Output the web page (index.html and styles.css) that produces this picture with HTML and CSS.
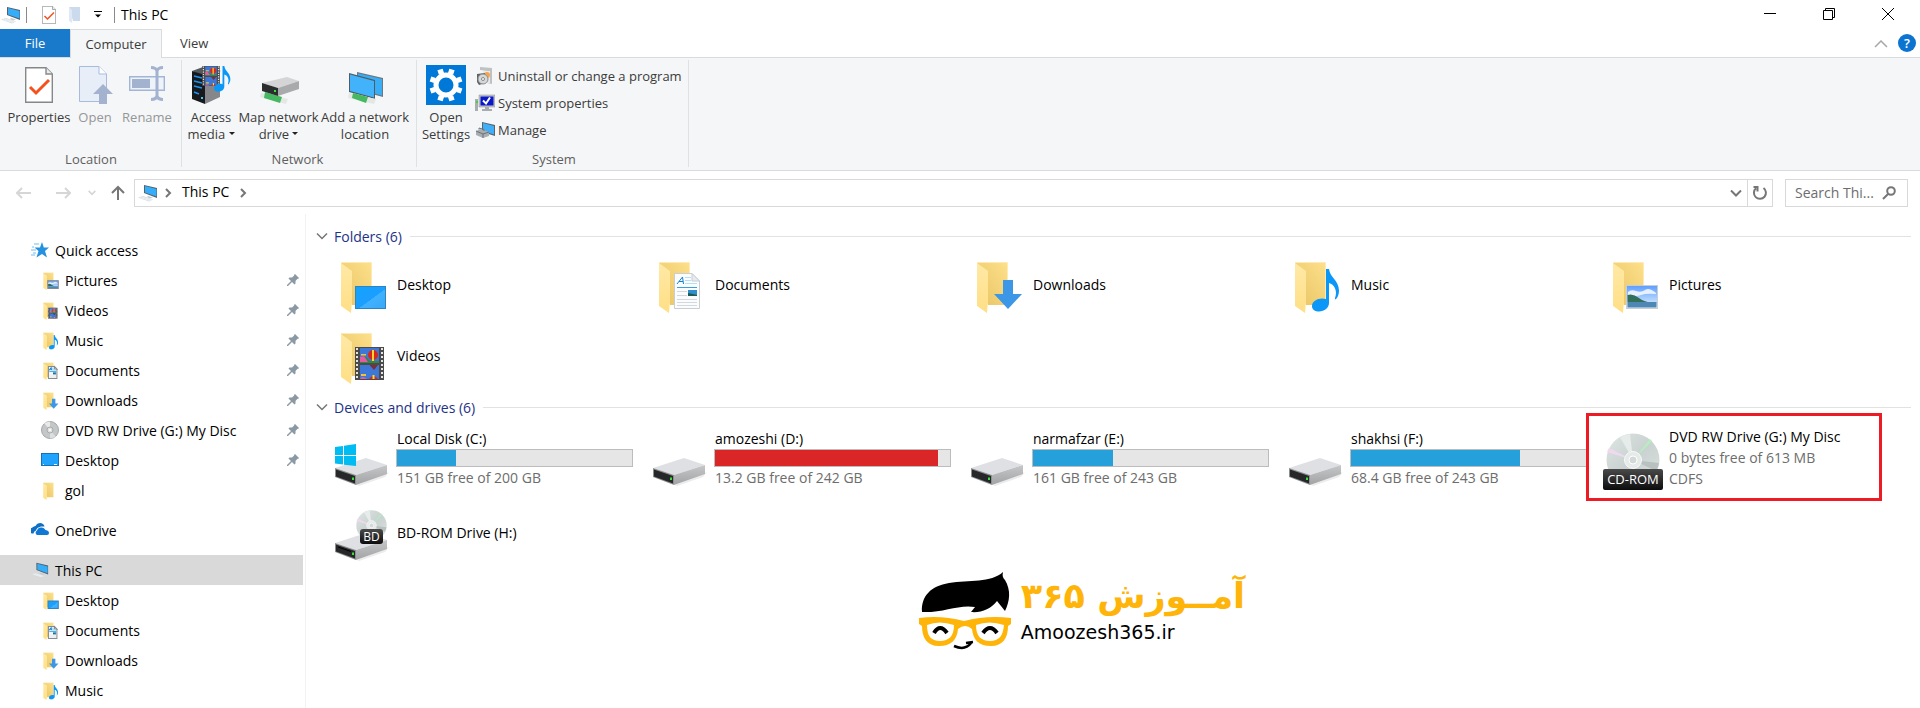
FILE: index.html
```
<!DOCTYPE html>
<html lang="en">

<head>
  <meta charset="UTF-8">
  <title>This PC</title>
  <link rel="stylesheet" href="styles.css">
</head>

<body>
  <!-- shared icons -->
  <svg class="sprite" aria-hidden="true">
    <defs>
      <linearGradient id="gBack" x1="0" y1="1" x2="1" y2="0"><stop offset="0" stop-color="#e8c364"/><stop offset="1" stop-color="#fde08a"/></linearGradient>
      <linearGradient id="gFlap" x1="0" y1="0" x2="0" y2="1"><stop offset="0" stop-color="#ffe9a6"/><stop offset="1" stop-color="#ffdf85"/></linearGradient>
      <linearGradient id="gBlue" x1="0" y1="0" x2="1" y2="1"><stop offset="0" stop-color="#14a3ff"/><stop offset=".55" stop-color="#1b9eff"/><stop offset=".56" stop-color="#3fb2ff"/><stop offset="1" stop-color="#3aa8f5"/></linearGradient>
      <linearGradient id="gSide" x1="0" y1="0" x2="0" y2="1"><stop offset="0" stop-color="#c6c7c9"/><stop offset="1" stop-color="#a2a3a5"/></linearGradient>
      <linearGradient id="gDisc" x1="0" y1="0" x2="1" y2="1"><stop offset="0" stop-color="#dfe6e5"/><stop offset=".5" stop-color="#c9d2d0"/><stop offset="1" stop-color="#dde3e2"/></linearGradient>
      <linearGradient id="gSky" x1="0" y1="0" x2="0" y2="1"><stop offset="0" stop-color="#5c9dff"/><stop offset="1" stop-color="#e4f5ff"/></linearGradient>
    </defs>

    <symbol id="folder" viewBox="0 -5 52 56">
      <path d="M0 0H30V43H11Z" fill="url(#gBack)"/>
      <path d="M0 .5H30.500V43" fill="none" stroke="#fdeab4" stroke-width="1"/>
      <path d="M0 1L11 9V38L10 51L0 44Z" fill="url(#gFlap)"/>
    </symbol>

    <symbol id="film" viewBox="0 0 29 33">
      <path d="M0 0H29V33H0Z" fill="#4b4b4b"/>
      <path d="M2 1V33M27 1V33" stroke="#e4e4e4" stroke-width="2" stroke-dasharray="2 2"/>
      <path d="M5 1H24V16H5ZM5 18H24V32H5Z" fill="#3d78d8"/>
      <path d="M5 12Q8 7 11 10L15 14H24V16H5Z" fill="#2f8a3c"/>
      <path d="M5 10L9 9L13 15H5Z" fill="#e55aa5"/>
      <path d="M6 7H11V8.500H6ZM6 27H11V29H6Z" fill="#f2c530"/>
      <circle cx="18" cy="8" r="5" fill="#d8261c"/>
      <path d="M17 3H19V14H17Z" fill="#ffd52e"/>
      <path d="M14.500 18H23L19 23Z" fill="#7a2f3a"/>
      <path d="M14 32A5 5 0 0 1 23 32Z" fill="#d8261c"/>
      <path d="M17.500 28H19.500V32H17.500Z" fill="#ffd52e"/>
      <path d="M5 32Q7 28 12 32Z" fill="#e55aa5"/>
    </symbol>

    <symbol id="note" viewBox="0 0 28 43">
      <path d="M14 0H17C18 9 27 11 27 22C27 26 25 29 24 30C23 31 23 30 23 29C26 22 22 15 17 14V34C17 39 12 43 6 42.500C1 42 0 39 0 37C0 32 7 28 14 30Z" fill="#0a97f7"/>
    </symbol>

    <symbol id="f-desktop" viewBox="0 -5 52 56">
      <use href="#folder" x="0" y="-5" width="52" height="56"/>
      <rect x="14.500" y="24.500" width="30" height="22" fill="url(#gBlue)" stroke="#2d84c0"/>
    </symbol>
    <symbol id="f-documents" viewBox="0 -5 52 56">
      <use href="#folder" x="0" y="-5" width="52" height="56"/>
      <path d="M15.500 11.500H33L40.500 19V46.500H15.500Z" fill="#fbfcfd" stroke="currentColor"/>
      <path d="M33 11.500V19H40.500Z" fill="#e8ebee" stroke="currentColor"/>
      <path d="M26 15.500H32M26 18.500H32M26 21.500H38" stroke="#b6dff5"/>
      <path d="M18 25.500H38" stroke="#3aa0dc"/>
      <path d="M18 29.500H28M18 33.500H28M18 37.500H38M18 40.500H38M18 43.500H38" stroke="#d3d8dc" stroke-width="1"/>
      <path d="M29 28H38V34H29Z" fill="#2e8fd0"/>
      <path d="M29 31L34 32L38 33V34H29Z" fill="#1d5b53"/>
      <path d="M18 22L23.500 15L24.500 22M20 19.500H24" fill="none" stroke="#1583cc"/>
    </symbol>
    <symbol id="f-downloads" viewBox="0 -5 52 56">
      <use href="#folder" x="0" y="-5" width="52" height="56"/>
      <path d="M26 18H36V32H45L31 47L17 32H26Z" fill="#3c97e6"/>
    </symbol>
    <symbol id="f-music" viewBox="0 -5 52 56">
      <use href="#folder" x="0" y="-5" width="52" height="56"/>
      <use href="#note" x="17" y="7" width="28" height="43"/>
    </symbol>
    <symbol id="f-pictures" viewBox="0 -5 52 56">
      <use href="#folder" x="0" y="-5" width="52" height="56"/>
      <rect x="13.500" y="23.500" width="31" height="23" fill="url(#gSky)" stroke="currentColor"/>
      <path d="M15 30Q18 27 23 29T32 28T43 31V32Q33 31 28 33T15 33Z" fill="#fff" opacity=".8"/>
      <path d="M14.500 33Q20 31 26 36T41 40H14.500Z" fill="#33705c"/>
      <path d="M14.500 40H43.500V45.500H14.500Z" fill="#4e86b4"/>
    </symbol>
    <symbol id="f-videos" viewBox="0 -5 52 56">
      <use href="#folder" x="0" y="-5" width="52" height="56"/>
      <use href="#film" x="14" y="14" width="29" height="33"/>
    </symbol>

    <symbol id="drivebox" viewBox="0 0 54 28">
      <path d="M22 27L54 14L50 19L24 28Z" fill="#ececec"/>
      <path d="M0 10L31 0L52 7L21 17Z" fill="#dfe0e4"/>
      <path d="M21 17L52 7V16L21 27Z" fill="url(#gSide)"/>
      <path d="M0 10L21 17V27L0 19Z" fill="#8d8e90"/>
      <path d="M1 11.500L20 18V25.500L1 18.500Z" fill="#262728"/>
      <path d="M17 19.500h2v2.500h-2z" fill="#37e03c"/>
    </symbol>
    <symbol id="disc" viewBox="0 0 54 54">
      <circle cx="27" cy="27" r="26.500" fill="url(#gDisc)"/>
      <path d="M27 27L1 19A27 27 0 0 1 3 15Z" fill="#efd9ef"/>
      <path d="M27 27L44 6L46 8Z" fill="#b5efbd"/>
      <path d="M27 27L53 30A26 26 0 0 1 50 38Z" fill="#b8c1bf"/>
      <path d="M27 27L14 4A26 26 0 0 1 24 1Z" fill="#e6ecea"/>
      <circle cx="27" cy="27" r="8.500" fill="#e6ebea" stroke="#f7f9f9"/>
      <circle cx="27" cy="27" r="4" fill="#d2d9d8" stroke="#fff"/>
    </symbol>
    <symbol id="drive" viewBox="0 0 64 64">
      <use href="#drivebox" x="7" y="32" width="54" height="28"/>
    </symbol>
    <symbol id="drive-win" viewBox="0 0 64 64">
      <use href="#drivebox" x="7" y="32" width="54" height="28"/>
      <path d="M7 21L15 20V29H7ZM16 19.800L28 18V29H16ZM7 30H15V38.500L7 37.500ZM16 30H28V40L16 38.700Z" fill="#00bcf2"/>
    </symbol>
    <symbol id="drive-bd" viewBox="0 0 64 64">
      <use href="#disc" x="28" y="9" width="31" height="31"/>
      <use href="#drivebox" x="7" y="32" width="54" height="28"/>
      <path d="M10 46L23 50.500" stroke="#000"/>
    </symbol>
    <symbol id="drive-cd" viewBox="0 0 64 64">
      <use href="#disc" x="6" y="7" width="54" height="54"/>
    </symbol>

    <symbol id="pc" viewBox="0 0 20 18">
      <path d="M6 1L19 4V14L6 9Z" fill="#54606a"/>
      <path d="M7 2L18.500 5V12.500L7 8.500Z" fill="#35adf9"/>
      <path d="M10 12L15 13.500L12 14.500L9 13Z" fill="#c2cbd2"/>
      <path d="M0 13.500L5 12L15 15.500L11 17.500Z" fill="#d2dadf"/>
      <path d="M2 13.500L12 16.500M4 13L14 16" stroke="#fff" stroke-width=".6"/>
    </symbol>
    <symbol id="doccheck" viewBox="0 0 28 36">
      <path d="M.7 .7H21L27.300 7V35.300H.7Z" fill="#fff" stroke="#85888b" stroke-width="1.400"/>
      <path d="M21 .7V7H27.300" fill="#ececec" stroke="#85888b" stroke-width="1.400"/>
      <path d="M5 20L11 26L24 13" fill="none" stroke="#f4511e" stroke-width="3"/>
    </symbol>
    <symbol id="pin" viewBox="0 0 12 12">
      <path d="M8 0L12 4L11 5L10.500 4.800L8.500 7L8.500 9.500L7.500 10.500L5 8L1 12L0 12L0 11L4 7L1.500 4.500L2.500 3.500L5 3.500L7.200 1.500L7 1Z" fill="#8b99a4"/>
    </symbol>
    <symbol id="screen" viewBox="0 0 18 14">
      <rect x=".5" y=".5" width="17" height="12" fill="#1fa3fd" stroke="#1573b5"/>
      <path d="M2 11.500h1M13 11.500h3" stroke="#fff"/>
    </symbol>
    <symbol id="down" viewBox="0 0 12 12"><path d="M1 3.500L6 8.500L11 3.500" fill="none" stroke="currentColor" stroke-width="1.500"/></symbol>
    <symbol id="right" viewBox="0 0 12 12"><path d="M4 2L8 6L4 10" fill="none" stroke="currentColor" stroke-width="2"/></symbol>
  </svg>

  <header class="titlebar">
    <svg class="pc-icon"><use href="#pc"/></svg>
    <span class="sep"></span>
    <button class="qat" aria-label="Properties"><svg width="14" height="18"><use href="#doccheck"/></svg></button>
    <button class="qat" aria-label="New folder"><svg width="14" height="18" viewBox="0 0 14 18"><path d="M1 1H12V15H5Z" fill="#ccdaed"/><path d="M1 1L4 4V17L1 15Z" fill="#dfe9f5"/></svg></button>
    <button class="qat qat-more" aria-label="Customize"><svg width="8" height="8" viewBox="0 0 8 8"><path d="M0 .5H8" stroke="#000"/><path d="M1 3.500H7L4 6.500Z"/></svg></button>
    <span class="sep"></span>
    <h1>This PC</h1>
    <div class="win-buttons">
      <button aria-label="Minimize"><svg width="12" height="12" viewBox="0 0 12 12"><path d="M0 5.500H12"/></svg></button>
      <button aria-label="Restore"><svg width="12" height="12" viewBox="0 0 12 12"><path d="M.5 2.500H9.500V11.500H.5ZM2.500 2.500V.5H11.500V9.500H9.500"/></svg></button>
      <button aria-label="Close"><svg width="12" height="12" viewBox="0 0 12 12"><path d="M0 0L12 12M12 0L0 12"/></svg></button>
    </div>
  </header>

  <nav class="tabs">
    <button class="tab tab-file">File</button>
    <button class="tab tab-active">Computer</button>
    <button class="tab">View</button>
    <div class="tabs-right">
      <button aria-label="Collapse ribbon"><svg width="14" height="8" viewBox="0 0 14 8"><path d="M1 7L7 1L13 7" fill="none" stroke="#a8a8a8" stroke-width="1.500"/></svg></button>
      <button class="help" aria-label="Help">?</button>
    </div>
  </nav>

  <section class="ribbon">
    <div class="group location">
      <div class="group-body">
        <button class="big w64"><svg width="28" height="36"><use href="#doccheck"/></svg>Properties</button>
        <button class="big w48" disabled><svg width="36" height="38" viewBox="0 0 36 38"><path d="M2.500 .5H22L29.500 8V35.500H2.500Z" fill="#e7eef8" stroke="#a9bbdc"/><path d="M22 .5V8H29.500" fill="#fff" stroke="#a9bbdc"/><path d="M26 18L36 28H30V38H22V28H16Z" fill="#a3b2cf"/></svg>Open</button>
        <button class="big w56" disabled><svg width="36" height="38" viewBox="0 0 36 38"><path d="M.7 10.700H35.300V24.300H.7Z" fill="#eef3fa" stroke="#a3b5d5" stroke-width="1.400"/><path d="M3 13H21V22H3Z" fill="#a3b2cf"/><path d="M28 4V31M22 1.500Q27 1.500 28 5Q29 1.500 34 1.500M22 33.500Q27 33.500 28 30Q29 33.500 34 33.500" fill="none" stroke="#a3b2cf" stroke-width="3"/></svg>Rename</button>
      </div>
      <div class="group-name">Location</div>
    </div>
    <div class="group network">
      <div class="group-body">
        <button class="big w52">
          <svg width="40" height="38" viewBox="0 0 40 38">
            <path d="M1 5L12 1L30 5L12 10Z" fill="#55585c"/><path d="M1 5L14 9V38L1 33Z" fill="#17191c"/><path d="M14 9L29 5V31L14 38Z" fill="#85878b"/>
            <path d="M3 10L11 12M3 15L11 17M3 20L11 22M3 26L8 28" stroke="#1b95f0" stroke-width="1.500"/><path d="M10 31h2v2h-2z" fill="#3cc7ff"/>
            <use href="#film" x="11" y="0" width="18" height="20"/><use href="#note" x="23" y="0" width="17" height="26"/>
          </svg>Access<br><span>media <i class="caret"></i></span></button>
        <button class="big w83">
          <svg width="40" height="38" viewBox="0 0 40 38">
            <path d="M2 27L29 33L27 38L1 31Z" fill="#e3e8e5"/><path d="M6 26L23 31L21 37L5 32Z" fill="#47b862"/>
            <path d="M3 17L28 11L40 15L19 22Z" fill="#d5d5d6"/><path d="M19 22L40 15V23L19 30Z" fill="#a9aaac"/><path d="M3 17L19 22V30L3 25Z" fill="#2b2d2f"/><path d="M15 24h2v2h-2z" fill="#37e03c"/>
          </svg>Map network<br><span>drive <i class="caret"></i></span></button>
        <button class="big w90">
          <svg width="40" height="38" viewBox="0 0 40 38">
            <path d="M12 6L38 12V31L12 24Z" fill="#6c7881"/><path d="M13 7.500L37 13V29.500L13 23Z" fill="#38aef7"/>
            <path d="M4 7L30 14V33L4 26Z" fill="#4f5c66"/><path d="M5 8.500L29 15V31.500L5 25Z" fill="#42b2fa"/>
            <path d="M4 27L31 33L29 38L3 32Z" fill="#e3e8e5"/><path d="M8 27L23 31L21 37L7 32Z" fill="#47b862"/>
          </svg>Add a network<br>location</button>
      </div>
      <div class="group-name">Network</div>
    </div>
    <div class="group system">
      <div class="group-body">
        <button class="big w52 settings">
          <svg width="40" height="40" viewBox="0 0 40 40"><path d="M0 0H40V40H0Z" fill="#0078d7"/><circle cx="20" cy="20" r="10" fill="none" stroke="#fff" stroke-width="5"/><path d="M15.500 9L14 4.500M24.500 9L26 4.500M24.500 31L26 35.500M15.500 31L14 35.500M9 15.500L4.500 14M9 24.500L4.500 26M31 15.500L35.500 14M31 24.500L35.500 26" stroke="#fff" stroke-width="5.500"/></svg>Open<br>Settings</button>
        <div class="small-list">
          <button><svg width="20" height="20" viewBox="0 0 20 20"><path d="M5 1L17 2V18L12 17V5L5 4Z" fill="#bfc1c3"/><path d="M8 5H15V17H8Z" fill="#e8e9ea"/><circle cx="12" cy="9" r="3" fill="#f6a54a"/><path d="M2 8L10 7V17L4 19L2 16Z" fill="#5f6265"/><circle cx="8" cy="13" r="5" fill="#d5d9da" stroke="#8a8e90"/><circle cx="8" cy="13" r="1.500" fill="#fff" stroke="#888"/></svg>Uninstall or change a program</button>
          <button><svg width="20" height="20" viewBox="0 0 20 20"><path d="M0 6H3V18H0Z" fill="#a9adb0"/><path d="M1 8h2v2h-2z" fill="#3bd43b"/><path d="M4 2H20V14H4Z" fill="#c3c6c8" stroke="#888" stroke-width=".5"/><path d="M5.500 3.500H18.500V12.500H5.500Z" fill="#0a18c8"/><path d="M8 7.500L11 10.500L15 4.500" fill="none" stroke="#fff" stroke-width="2"/><path d="M10 14H14V16H17V18H7V16H10Z" fill="#a9adb0"/></svg>System properties</button>
          <button><svg width="20" height="20" viewBox="0 0 20 20"><path d="M7 2L20 5V16L7 12Z" fill="#58636b"/><path d="M8 3L19 6V14.500L8 11Z" fill="#41aff7"/><path d="M1 11L6 9L14 12V16L8 18L1 15Z" fill="#a8adb1"/><path d="M1 11L8 14L14 12M8 14V18" fill="none" stroke="#6c7276"/><path d="M4 9.500V8L9 9.500V11" fill="none" stroke="#6c7276"/></svg>Manage</button>
        </div>
      </div>
      <div class="group-name">System</div>
    </div>
  </section>

  <div class="addressbar">
    <div class="nav-buttons">
      <button disabled aria-label="Back"><svg width="16" height="12" viewBox="0 0 16 12"><path d="M1 6H15M6 1L1 6L6 11"/></svg></button>
      <button disabled aria-label="Forward"><svg width="16" height="12" viewBox="0 0 16 12"><path d="M1 6H15M10 1L15 6L10 11"/></svg></button>
      <button class="recent" disabled aria-label="Recent locations"><svg width="10" height="10" viewBox="0 0 12 12"><path d="M2 3.500L6 7.500L10 3.500"/></svg></button>
      <button class="up" aria-label="Up"><svg width="14" height="16" viewBox="0 0 14 16"><path d="M7 15V2M1 8L7 2L13 8"/></svg></button>
    </div>
    <div class="path">
      <svg class="pc-icon"><use href="#pc"/></svg>
      <svg class="crumb-arrow"><use href="#right"/></svg>
      <a href="#">This PC</a>
      <svg class="crumb-arrow"><use href="#right"/></svg>
      <button class="history" aria-label="Previous locations"><svg width="12" height="12" viewBox="0 0 12 12"><path d="M1 3.500L6 8.500L11 3.500"/></svg></button>
      <button class="refresh" aria-label="Refresh"><svg width="16" height="16" viewBox="0 0 16 16"><path d="M11.500 3A6 6 0 1 1 4 3.300M1.500 2H5.500V6.500"/></svg></button>
    </div>
    <form class="search">
      <input type="text" placeholder="Search Thi..." aria-label="Search This PC">
      <button type="button" aria-label="Search"><svg width="14" height="14" viewBox="0 0 14 14"><circle cx="9" cy="5" r="3.800"/><path d="M6.300 7.700L1 13"/></svg></button>
    </form>
  </div>

  <div class="content">
    <nav class="sidebar">
      <ul>
        <li><a class="root" href="#"><svg width="18" height="18" viewBox="0 0 18 18"><path d="M11 1L12.800 6.500H18L14 10L16 16.500L11 13L5.500 16.500L7.500 10L3.500 6.500H9Z" fill="#2490e0"/><path d="M3 3H8M1 6H3M0 9H5M2 12H5M0 14H4" stroke="#68bff2"/></svg>Quick access</a></li>
        <li><a href="#"><svg class="f"><use href="#f-pictures"/></svg>Pictures<svg class="pin"><use href="#pin"/></svg></a></li>
        <li><a href="#"><svg class="f"><use href="#f-videos"/></svg>Videos<svg class="pin"><use href="#pin"/></svg></a></li>
        <li><a href="#"><svg class="f"><use href="#f-music"/></svg>Music<svg class="pin"><use href="#pin"/></svg></a></li>
        <li><a href="#"><svg class="f"><use href="#f-documents"/></svg>Documents<svg class="pin"><use href="#pin"/></svg></a></li>
        <li><a href="#"><svg class="f"><use href="#f-downloads"/></svg>Downloads<svg class="pin"><use href="#pin"/></svg></a></li>
        <li><a href="#"><svg class="d"><circle cx="9" cy="9" r="8.500" fill="#c4c7c7" stroke="#a5a8a8"/><path d="M9 9L3 2L9 .5Z" fill="#e8eaea"/><path d="M9 9L15 16L9 17.500Z" fill="#dcdfdf"/><circle cx="9" cy="9" r="3" fill="#dfe1e1" stroke="#aaa"/><circle cx="9" cy="9" r="1" fill="#fff"/></svg>DVD RW Drive (G:) My Disc<svg class="pin"><use href="#pin"/></svg></a></li>
        <li><a href="#"><svg class="d"><use href="#screen"/></svg>Desktop<svg class="pin"><use href="#pin"/></svg></a></li>
        <li><a href="#"><svg class="f"><use href="#folder"/></svg>gol</a></li>
      </ul>
      <ul>
        <li><a class="root" href="#"><svg width="18" height="18" viewBox="0 0 18 18"><path d="M2.500 12.500A3 3 0 0 1 1 6.700Q3 5 4.500 5Q6 2 9.500 2Q13 2.500 13.500 5.500L10 5.500Q5.500 6.500 5 9.500Q3 10 2.500 12.500Z" fill="#0f6fc5"/><path d="M6 14A2.500 2.500 0 0 1 6 9.500Q7 6.500 10 6.500Q13 6 14.500 9Q18 9.500 18 12Q18 14 16 14Z" fill="#0f78d4"/></svg>OneDrive</a></li>
      </ul>
      <ul>
        <li><a class="root selected" href="#"><svg class="r"><use href="#pc"/></svg>This PC</a></li>
        <li><a href="#"><svg class="f"><use href="#f-desktop"/></svg>Desktop</a></li>
        <li><a href="#"><svg class="f"><use href="#f-documents"/></svg>Documents</a></li>
        <li><a href="#"><svg class="f"><use href="#f-downloads"/></svg>Downloads</a></li>
        <li><a href="#"><svg class="f"><use href="#f-music"/></svg>Music</a></li>
      </ul>
    </nav>

    <main>
      <h2><svg><use href="#down"/></svg>Folders (6)</h2>
      <div class="tiles folders">
        <a class="tile" href="#"><svg><use href="#f-desktop"/></svg><span class="name">Desktop</span></a>
        <a class="tile" href="#"><svg><use href="#f-documents"/></svg><span class="name">Documents</span></a>
        <a class="tile" href="#"><svg><use href="#f-downloads"/></svg><span class="name">Downloads</span></a>
        <a class="tile" href="#"><svg><use href="#f-music"/></svg><span class="name">Music</span></a>
        <a class="tile" href="#"><svg><use href="#f-pictures"/></svg><span class="name">Pictures</span></a>
        <a class="tile" href="#"><svg><use href="#f-videos"/></svg><span class="name">Videos</span></a>
      </div>

      <h2><svg><use href="#down"/></svg>Devices and drives (6)</h2>
      <div class="tiles drives">
        <a class="tile" href="#"><div class="icon"><svg><use href="#drive-win"/></svg></div>
          <div class="info"><span class="name">Local Disk (C:)</span><div class="bar"><div class="fill" style="width: 25%"></div></div><span class="free">151 GB free of 200 GB</span></div></a>
        <a class="tile" href="#"><div class="icon"><svg><use href="#drive"/></svg></div>
          <div class="info"><span class="name">amozeshi (D:)</span><div class="bar"><div class="fill full" style="width: 95%"></div></div><span class="free">13.2 GB free of 242 GB</span></div></a>
        <a class="tile" href="#"><div class="icon"><svg><use href="#drive"/></svg></div>
          <div class="info"><span class="name">narmafzar (E:)</span><div class="bar"><div class="fill" style="width: 34%"></div></div><span class="free">161 GB free of 243 GB</span></div></a>
        <a class="tile" href="#"><div class="icon"><svg><use href="#drive"/></svg></div>
          <div class="info"><span class="name">shakhsi (F:)</span><div class="bar"><div class="fill" style="width: 72%"></div></div><span class="free">68.4 GB free of 243 GB</span></div></a>
        <a class="tile marked" href="#"><div class="icon"><svg><use href="#drive-cd"/></svg><span class="badge badge-cd">CD-ROM</span></div>
          <div class="info"><span class="name">DVD RW Drive (G:) My Disc</span><span class="free">0 bytes free of 613 MB</span><span class="free">CDFS</span></div></a>
        <a class="tile" href="#"><div class="icon"><svg><use href="#drive-bd"/></svg><span class="badge badge-bd">BD</span></div>
          <div class="info"><span class="name">BD-ROM Drive (H:)</span></div></a>
      </div>

      <div class="brand">
        <svg width="92" height="78" viewBox="0 0 92 78">
          <path d="M3 40C2 24 12 14 30 11C50 8 72 11 84 0C83 4 84 6 86 8C92 18 91 29 86 39L78 29C72 37 62 41 52 40L56 35C40 32 24 41 3 40Z" fill="#000"/>
          <path d="M0 46Q22 43 45 49Q68 43 92 46V52L89 54C89 66 84 74 72 74C60 74 54 68 53 57Q46 51 39 57C38 68 32 74 20 74C8 74 3 66 3 54L0 52Z" fill="#ffb409"/>
          <path d="M8 53Q20 48 35 53C35 64 30 69 21 69C12 69 8 64 8 53ZM57 53Q70 48 85 53C84 64 80 69 71 69C62 69 57 64 57 53Z" fill="#fff"/>
          <path d="M15 61Q21 51 28 61M64 61Q71 51 78 61" fill="none" stroke="#000" stroke-width="4"/>
          <path d="M35 74Q46 79 52 71M47 71L54 70" fill="none" stroke="#000" stroke-width="2.500"/>
        </svg>
        <div class="brand-text">
          <strong lang="fa" dir="rtl">آمــوزش ۳۶۵</strong>
          <span>Amoozesh365.ir</span>
        </div>
      </div>
    </main>
  </div>
</body>

</html>
```
FILE: styles.css
```
* {
  box-sizing: border-box;
}

body {
  margin: 0;
  height: 100vh;
  overflow: hidden;
  display: flex;
  flex-direction: column;
  background: #fff;
  color: #000;
  font-family: "Open Sans", "Noto Sans", sans-serif;
  font-size: 14px;
}

button {
  padding: 0;
  border: 0;
  background: none;
  color: inherit;
  font: inherit;
}

a {
  color: inherit;
  text-decoration: none;
}

ul {
  margin: 0 0 10px;
  padding: 0;
  list-style: none;
}

svg {
  flex: none;
}

.sprite {
  position: absolute;
  width: 0;
  height: 0;
}

.pc-icon {
  width: 20px;
  height: 18px;
}

/* title bar */
.titlebar {
  display: flex;
  align-items: center;
  height: 29px;
  padding: 0 3px 0 1px;
}

.sep {
  width: 1px;
  height: 16px;
  margin: 0 15px 0 5px;
  background: #8a8a8a;
}

.qat {
  display: flex;
  margin-right: 12px;
}

.qat-more {
  margin: 0 7px 0 0;
}

.titlebar h1 {
  margin: 0 0 0 -9px;
  font-size: 14px;
  font-weight: 400;
}

.win-buttons {
  display: flex;
  height: 100%;
  margin-left: auto;
}

.win-buttons button {
  width: 59px;
}

.win-buttons path {
  fill: none;
  stroke: #000;
}

/* tabs */
.tabs {
  display: flex;
  height: 29px;
  border-bottom: 1px solid #dadbdc;
  font-size: 13px;
  color: #3b3b3b;
}

.tab {
  padding: 0 18px;
}

.tab-file {
  width: 70px;
  background: #1979ca;
  color: #fff;
}

.tab-active {
  width: 92px;
  height: 29px;
  padding: 0;
  border: 1px solid #dadbdc;
  border-bottom: 0;
  background: #f5f6f7;
}

.tabs-right {
  display: flex;
  align-items: center;
  gap: 10px;
  margin-left: auto;
  padding-right: 4px;
}

.help {
  width: 18px;
  height: 18px;
  border-radius: 50%;
  background: #0c74d0;
  color: #fff;
  font-weight: 600;
  line-height: 18px;
}

/* ribbon */
.ribbon {
  display: flex;
  height: 113px;
  padding: 2px 0 3px;
  border-bottom: 1px solid #dadbdc;
  background: #f5f6f7;
  color: #3b3b3b;
  font-size: 13px;
}

.group {
  display: flex;
  flex-direction: column;
  border-right: 1px solid #e0e1e3;
}

.group-body {
  display: flex;
  flex: 1;
}

.location {
  padding: 0 6px 0 7px;
}

.network {
  padding: 0 6px 0 3px;
}

.system {
  width: 272px;
  padding-left: 3px;
}

.group-name {
  height: 16px;
  color: #5f5f5f;
  line-height: 16px;
  text-align: center;
}

.big {
  display: block;
  padding-top: 6px;
  line-height: 17px;
  white-space: nowrap;
  align-self: flex-start;
}

.big svg {
  display: block;
  height: 38px;
  margin: 0 auto 5px;
}

.big:disabled {
  color: #949699;
}

.settings {
  padding-top: 5px;
}

.settings svg {
  height: 40px;
  margin-bottom: 4px;
}

.w48 { width: 48px; }
.w52 { width: 52px; }
.w56 { width: 56px; }
.w64 { width: 64px; }
.w83 { width: 83px; }
.w90 { width: 90px; }

.caret {
  display: inline-block;
  border: 3px solid transparent;
  border-top-color: #222;
  border-bottom: 0;
  vertical-align: 4px;
}

.small-list {
  display: flex;
  flex-direction: column;
  padding: 2px 0 0 3px;
}

.small-list button {
  display: flex;
  align-items: center;
  gap: 3px;
  height: 27px;
  white-space: nowrap;
}

/* address bar */
.addressbar {
  display: flex;
  align-items: center;
  height: 43px;
  padding: 0 12px 0 16px;
}

.nav-buttons {
  display: flex;
  align-items: center;
  width: 118px;
  gap: 23px;
}

.nav-buttons button {
  display: flex;
}

.nav-buttons svg,
.path button svg,
.search svg {
  fill: none;
  stroke: #767676;
  stroke-width: 2;
}

.nav-buttons :disabled svg {
  stroke: #d6d6d6;
}

.nav-buttons .recent {
  margin: 0 -9px 0 -7px;
}

.path {
  display: flex;
  flex: 1;
  align-items: center;
  height: 28px;
  padding-left: 3px;
  border: 1px solid #d9d9d9;
}

.path a {
  line-height: 24px;
  padding-bottom: 2px;
}

.crumb-arrow {
  width: 12px;
  height: 12px;
  margin: 0 8px 0 4px;
  color: #767676;
}

.path .crumb-arrow + a {
  margin: 0 4px 0 0;
}

.history {
  margin-left: auto;
  padding-right: 5px;
}

.path .history,
.refresh {
  display: flex;
  align-items: center;
}

.refresh {
  justify-content: center;
  width: 25px;
  height: 26px;
  border-left: 1px solid #d9d9d9;
}

.search {
  display: flex;
  align-items: center;
  width: 123px;
  height: 28px;
  margin-left: 12px;
  padding: 0 11px 0 9px;
  border: 1px solid #d9d9d9;
}

.search input {
  flex: 1;
  min-width: 0;
  padding: 0;
  border: 0;
  outline: 0;
  font: inherit;
}

.search input::placeholder {
  color: #6d6d6d;
}

.search button {
  display: flex;
}

/* content */
.content {
  display: flex;
  flex: 1;
  min-height: 0;
}

.sidebar {
  width: 306px;
  padding: 21px 2px 0 0;
  border-right: 1px solid #f2f2f2;
  overflow: hidden;
}

.sidebar a {
  display: flex;
  align-items: center;
  height: 30px;
  padding: 0 4px 0 41px;
}

.sidebar .root {
  padding-left: 31px;
}

.root svg {
  width: 18px;
  margin-right: 6px;
}

.sidebar .selected {
  background: #d9d9d9;
}

.sidebar .f {
  width: 18px;
  height: 19px;
  margin: 0 4px 0 2px;
  color: #858b90;
  stroke-width: 3;
}

.sidebar .d,
.sidebar .r {
  width: 18px;
  height: 18px;
}

.sidebar .d {
  margin-right: 6px;
}

.sidebar .pin {
  width: 12px;
  height: 12px;
  margin-left: auto;
}

main {
  flex: 1;
  min-width: 0;
  padding-top: 10px;
}

main h2 {
  display: flex;
  align-items: center;
  height: 24px;
  margin: 0 9px 0 10px;
  color: #1e3287;
  font-size: 14px;
  font-weight: 400;
}

main h2::after {
  content: "";
  flex: 1;
  height: 1px;
  margin-left: 8px;
  background: #e2e2e2;
}

main h2 svg {
  width: 12px;
  height: 12px;
  margin-right: 6px;
  color: #767676;
}

.tiles {
  display: grid;
  grid-template-columns: repeat(auto-fill, 318px);
  padding-left: 22px;
}

.folders {
  grid-auto-rows: 71px;
  margin: 1px 0 4px;
}

.drives {
  grid-auto-rows: 75px;
  margin-top: 1px;
}

.tile {
  display: flex;
  align-items: center;
}

.icon {
  position: relative;
  height: 64px;
}

.icon svg {
  width: 64px;
  height: 64px;
}

.badge {
  position: absolute;
  background: linear-gradient(#4a4a4a, #0c0c0c);
  color: #fff;
  text-align: center;
}

.badge-cd {
  left: 3px;
  bottom: 0;
  width: 60px;
  border-radius: 2px;
  font-size: 13px;
  line-height: 21px;
}

.badge-bd {
  left: 32px;
  top: 28px;
  width: 23px;
  border-radius: 3px;
  font-size: 12px;
  line-height: 15px;
}

.folders .tile > svg {
  width: 52px;
  height: 56px;
  margin-left: 13px;
  color: #c9ced2;
}

.name,
.free {
  display: block;
  padding-left: 4px;
  line-height: 21px;
  white-space: nowrap;
}

.free {
  color: #6d6d6d;
}

.info .name,
.info .free {
  padding-left: 1px;
}

.info {
  width: 237px;
  margin-left: 4px;
}

.bar {
  height: 18px;
  border: 1px solid #bcbcbc;
  background: #e6e6e6;
}

.fill {
  height: 100%;
  background: #26a0da;
}

.full {
  background: #da2626;
}

/* red frame over the disc tile */
.marked {
  position: relative;
}

.marked::before {
  content: "";
  position: absolute;
  inset: -7px 36px -6px -14px;
  border: 3px solid #ed1c24;
}

.brand {
  display: flex;
  justify-content: center;
  align-items: flex-start;
  gap: 10px;
  padding: 2px 62px 0 0;
}

.brand-text {
  display: flex;
  flex-direction: column;
}

.brand strong {
  color: #ffb409;
  font-family: "DejaVu Sans", sans-serif;
  font-size: 35px;
  line-height: 48px;
}

.brand-text span {
  font-family: "DejaVu Sans", sans-serif;
  font-size: 19px;
  line-height: 24px;
}
```
